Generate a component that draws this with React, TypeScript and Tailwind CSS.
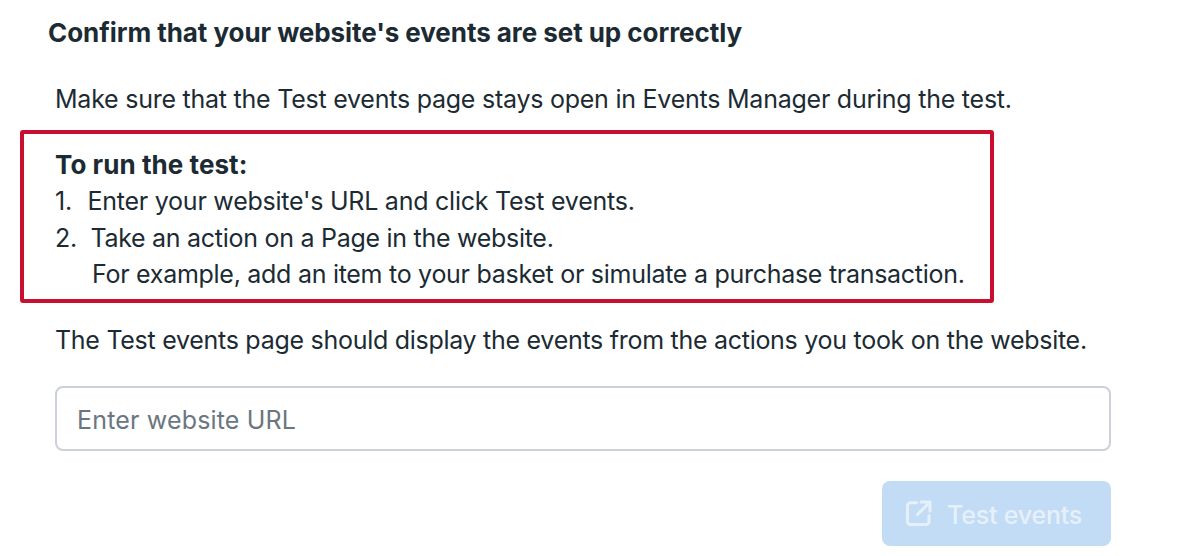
export default function App() {
  return (
    <div className="h-[556px] w-[1200px] overflow-hidden bg-white font-['Inter',sans-serif] text-[25px] leading-[37px] text-[#1c2b33]">
      <h1 className="ml-12 pt-[15px] text-[26px] leading-9 font-bold tracking-[-0.06px]">
        Confirm that your website's events are set up correctly
      </h1>

      <p className="mt-[30px] ml-[55px] tracking-[-0.24px]">
        Make sure that the Test events page stays open in Events Manager during the test.
      </p>

      {/* red highlight round the steps */}
      <div className="mt-[12px] ml-5 h-[173px] w-[974px] rounded-[3px] border-[4px] border-[#c8102e] pt-[12.5px] pl-[31px] leading-[36.5px] tracking-[-0.28px]">
        <div className="text-[26px] font-bold tracking-[0.06px]">To run the test:</div>
        <div className="tracking-[-0.24px]">
          1.<span className="ml-[2px]">&nbsp; Enter your website's URL and click Test events.</span>
        </div>
        <div>2.&nbsp; Take an action on a Page in the website.</div>
        <div className="pl-[37px]">For example, add an item to your basket or simulate a purchase transaction.</div>
      </div>

      <p className="mt-[18.5px] ml-[55px] tracking-[-0.28px]">
        The Test events page should display the events from the actions you took on the website.
      </p>

      <div className="mt-[27px] ml-[55px] w-[1056px]">
        <input
          placeholder="Enter website URL"
          className="h-[65px] w-full rounded-lg border-2 border-[#ccd0d9] bg-white px-5 pt-[3px] text-[25px] tracking-[0.17px] placeholder:text-[#6b7680] outline-none"
        />
        <div className="mt-[30px] flex justify-end">
          <button
            type="button"
            disabled
            className="flex h-[65px] w-[229px] items-center gap-[15px] rounded-lg bg-[#c3dcf5] pl-[23px] text-[25px] font-medium tracking-[-0.2px] text-[#e6f0fb]"
          >
            <svg width="27" height="27" viewBox="0 0 27 27" fill="none" stroke="currentColor" strokeWidth="3" strokeLinecap="round" strokeLinejoin="round">
              <path d="M11.5 2.8H5.5a3 3 0 0 0-3 3V21.5a3 3 0 0 0 3 3H21a3 3 0 0 0 3-3V15.5" />
              <path d="M12.5 14.5L24.5 2.5" />
              <path d="M16 2H25V11" />
            </svg>
            <span className="pt-[5px]">Test events</span>
          </button>
        </div>
      </div>
    </div>
  )
}
